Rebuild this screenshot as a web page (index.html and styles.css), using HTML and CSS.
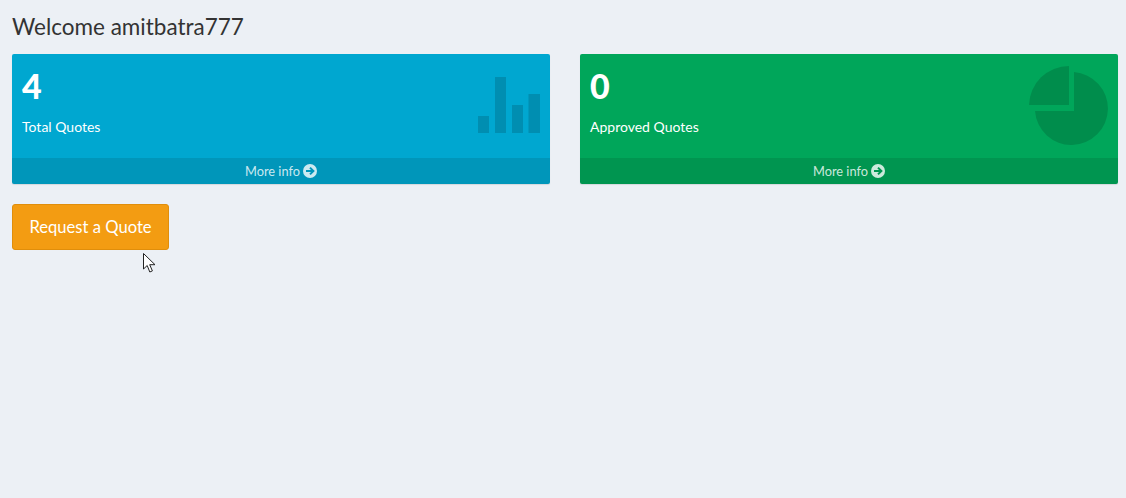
FILE: index.html
```html
<!DOCTYPE html>
<html lang="en">
<head>
<meta charset="utf-8">
<title>Welcome</title>
<link rel="stylesheet" href="styles.css">
</head>
<body>
<h1 class="welcome">Welcome amitbatra777</h1>
<div class="cards">
  <div class="card card-aqua">
    <div class="card-inner">
      <div class="card-text">
        <div class="count">4</div>
        <div class="label">Total Quotes</div>
      </div>
      <svg class="card-icon bars" width="62" height="56" viewBox="0 0 62 56"><path d="M0 39h11v17H0zM17 0h11v56H17zM34 28h11v28H34zM50.500 17H62v39H50.500z"/></svg>
    </div>
    <a class="more" href="#">More info <svg class="arrow" width="14" height="14" viewBox="0 0 14 14"><circle cx="7" cy="7" r="7" fill="currentColor"/><path class="arrow-stroke" d="M3 7h7M7 3.600 10.400 7 7 10.400"/></svg></a>
  </div>
  <div class="card card-green">
    <div class="card-inner">
      <div class="card-text">
        <div class="count">0</div>
        <div class="label">Approved Quotes</div>
      </div>
      <svg class="card-icon pie" width="79" height="79" viewBox="0 0 79 79"><path d="M40 0v39H0A40 40 0 0 1 40 0z"/><path d="M45 6.100A36.500 36.500 0 1 1 6 45H45z"/></svg>
    </div>
    <a class="more" href="#">More info <svg class="arrow" width="14" height="14" viewBox="0 0 14 14"><circle cx="7" cy="7" r="7" fill="currentColor"/><path class="arrow-stroke" d="M3 7h7M7 3.600 10.400 7 7 10.400"/></svg></a>
  </div>
</div>
<button class="quote-btn" type="button">Request a Quote</button>
<svg class="cursor" width="13" height="20" viewBox="0 0 13 20"><path d="M.5.500v15.500l3.700-3.500 2.600 6.500 2.600-1.100-2.700-6.200h5.300z" fill="#fff" stroke="#222" stroke-width="1"/></svg>
</body>
</html>
```
FILE: styles.css
```css
* { box-sizing: border-box; }
html, body { height: 100%; }
body {
  margin: 0;
  padding: 0 8px 0 12px;
  background: #ecf0f5;
  font-family: "Lato", "Noto Sans", sans-serif;
  overflow: hidden;
  position: relative;
}
.welcome {
  margin: 0;
  padding-top: 14px;
  height: 54px;
  font-size: 22.5px;
  line-height: 26px;
  font-weight: 400;
  color: #333;
}
.cards {
  display: grid;
  grid-template-columns: 538px 538px;
  column-gap: 30px;
}
.card {
  height: 130px;
  border-radius: 2px;
  color: #fff;
  display: flex;
  flex-direction: column;
  box-shadow: 0 1px 1px rgba(0,0,0,.1);
}
.card-aqua { background: #00a7d0; }
.card-green { background: #00a65a; }
.card-inner {
  flex: 1;
  display: flex;
  justify-content: space-between;
  padding: 0 10px;
}
.card-text { padding-top: 12px; }
.count {
  font-size: 34px;
  line-height: 40px;
  font-weight: 900;
}
.label {
  margin-top: 11px;
  font-size: 14px;
  line-height: 20px;
}
.card-icon { fill: rgba(0,0,0,.15); }
.bars { margin-top: 23px; }
.pie { margin-top: 12px; }
.more {
  height: 26px;
  display: flex;
  align-items: center;
  justify-content: center;
  gap: 3px;
  background: rgba(0,0,0,.1);
  color: rgba(255,255,255,.8);
  font-size: 12.8px;
  text-decoration: none;
  border-radius: 0 0 2px 2px;
}
.arrow-stroke { fill: none; stroke: #0096bb; stroke-width: 2; }
.card-green .arrow-stroke { stroke: #009551; }
.quote-btn {
  display: block;
  margin-top: 20px;
  width: 157px;
  height: 46px;
  padding: 0 0 1px;
  background: #f39c12;
  border: 1px solid #e08e0b;
  border-radius: 3px;
  color: #fff;
  font-family: inherit;
  font-size: 16.6px;
}
.cursor { position: absolute; left: 143px; top: 253px; }
```
